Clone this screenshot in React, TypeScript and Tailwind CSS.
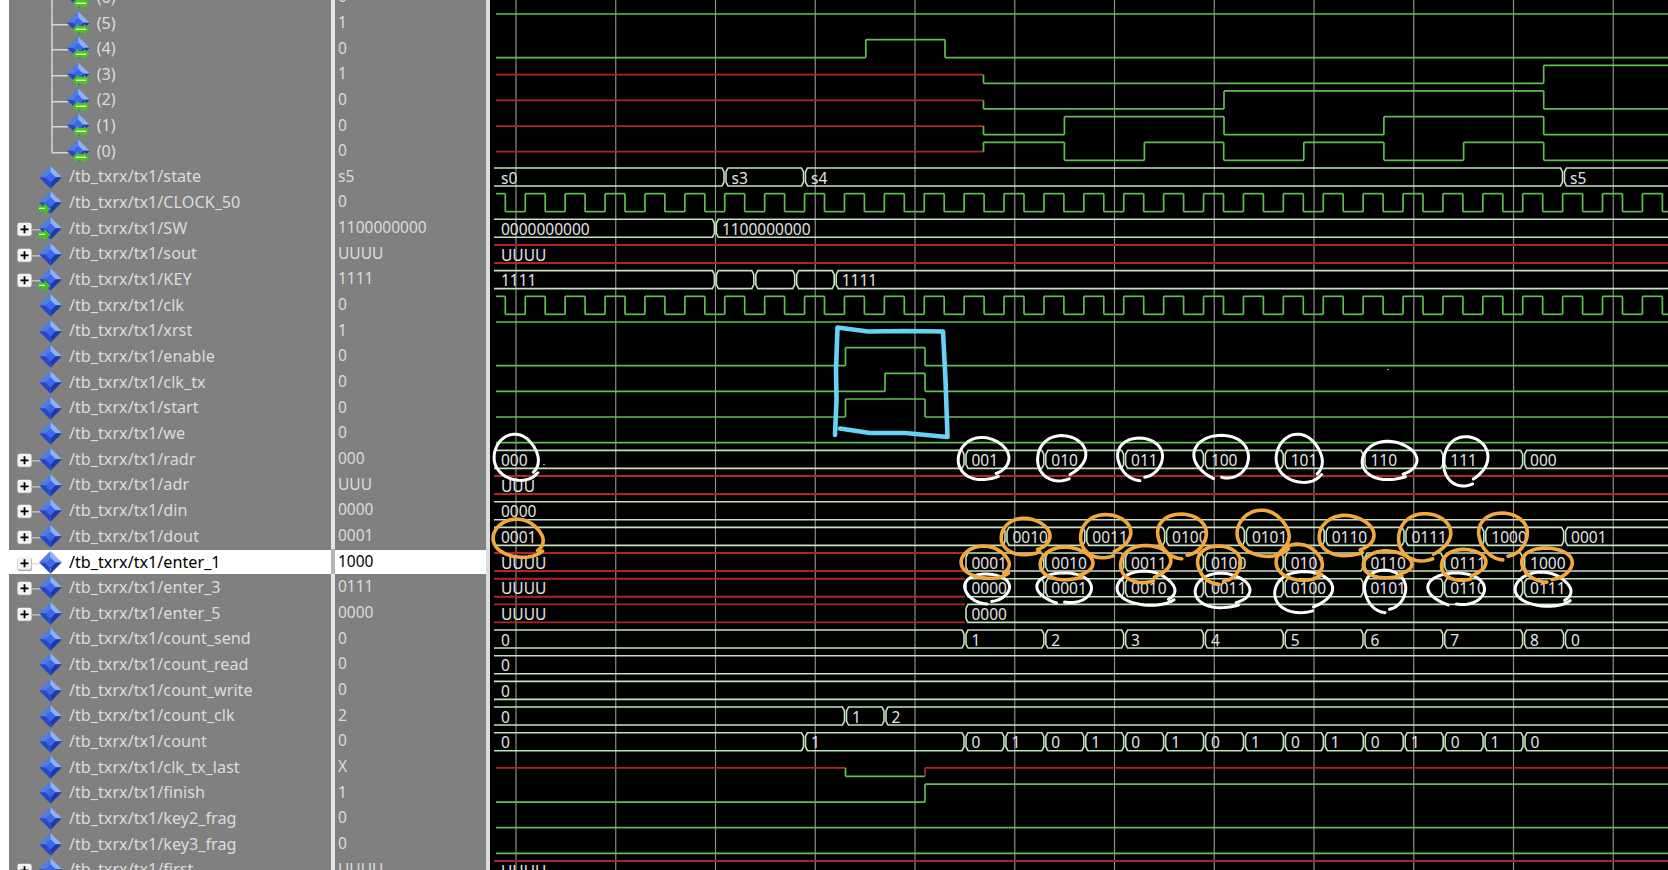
import React from 'react';

const rowY = (i: number) => 176.67 + 25.67 * i;
const LEFT = 496;
const RIGHT = 1668;
const GREEN = '#62bb54';
const RED = '#b02626';
const BUS = '#c2e2c0';

type Signal = { name: string; value: string; icon: 'sub' | 'plain' | 'in'; plus?: boolean; last?: boolean; selected?: boolean };

const sub = (n: number, value: string, last = false): Signal => ({ name: `(${n})`, value, icon: 'sub', last });
const sig = (n: string, value: string, plus = false, icon: 'plain' | 'in' = 'plain'): Signal => ({
  name: `/tb_txrx/tx1/${n}`,
  value,
  icon,
  plus,
});

const signals: Signal[] = [
  sub(6, '0'),
  sub(5, '1'),
  sub(4, '0'),
  sub(3, '1'),
  sub(2, '0'),
  sub(1, '0'),
  sub(0, '0', true),
  sig('state', 's5'),
  sig('CLOCK_50', '0', false, 'in'),
  sig('SW', '1100000000', true, 'in'),
  sig('sout', 'UUUU', true),
  sig('KEY', '1111', true, 'in'),
  sig('clk', '0'),
  sig('xrst', '1'),
  sig('enable', '0'),
  sig('clk_tx', '0'),
  sig('start', '0'),
  sig('we', '0'),
  sig('radr', '000', true),
  sig('adr', 'UUU', true),
  sig('din', '0000', true),
  sig('dout', '0001', true),
  { ...sig('enter_1', '1000', true), selected: true },
  sig('enter_3', '0111', true),
  sig('enter_5', '0000', true),
  sig('count_send', '0'),
  sig('count_read', '0'),
  sig('count_write', '0'),
  sig('count_clk', '2'),
  sig('count', '0'),
  sig('clk_tx_last', 'X'),
  sig('finish', '1'),
  sig('key2_frag', '0'),
  sig('key3_frag', '0'),
  sig('first', 'UUUU', true),
];

function Diamond({ cx, cy }: { cx: number; cy: number }) {
  const r = 11.4;
  const n = 5;
  return (
    <g>
      <polygon points={`${cx - r},${cy} ${cx},${cy - r} ${cx},${cy - n} ${cx - n},${cy}`} fill="#4f7ce6" />
      <polygon points={`${cx},${cy - r} ${cx + r},${cy} ${cx + n},${cy} ${cx},${cy - n}`} fill="#8db0f6" />
      <polygon points={`${cx + r},${cy} ${cx},${cy + r} ${cx},${cy + n} ${cx + n},${cy}`} fill="#1c39ad" />
      <polygon points={`${cx},${cy + r} ${cx - r},${cy} ${cx - n},${cy} ${cx},${cy + n}`} fill="#2747c8" />
      <polygon points={`${cx},${cy - n} ${cx + n},${cy} ${cx},${cy + n} ${cx - n},${cy}`} fill="#3a68ee" />
    </g>
  );
}

function RowIcon({ s }: { s: Signal }) {
  const mid = 12.83;
  if (s.icon === 'sub') {
    return (
      <svg className="shrink-0" width={87.7} height={25.67} viewBox="9 0 87.7 25.67" style={{ overflow: 'visible' }}>
        <path
          d={`M52 0V${s.last ? mid + 2 : 25.67}M52 ${mid + 2}H68`}
          fill="none"
          stroke="#d6d6d6"
          strokeWidth="1.5"
        />
        <Diamond cx={78.3} cy={mid} />
        <polygon
          points={`72.5,${mid + 6.5} 78,${mid + 1} 78,${mid + 3} 84,${mid + 3} 84,${mid + 1} 89.5,${mid + 6.5} 84,${mid + 12} 84,${mid + 10} 78,${mid + 10} 78,${mid + 12}`}
          fill="#4cc41e"
        />
        <path d={`M76 ${mid + 6.5}H86`} stroke="#eef9e6" strokeWidth="1.4" />
      </svg>
    );
  }
  return (
    <svg className="shrink-0" width={60} height={25.67} viewBox="9 0 60 25.67" style={{ overflow: 'visible' }}>
      {s.plus && (
        <g>
          <path d={`M31 ${mid + 2}H42`} stroke="#d0d0d0" strokeWidth="1.2" />
          <rect x={17.5} y={mid - 4} width={14.5} height={13} rx={2} fill="#8e8e8e" />
          <rect x={17.5} y={mid - 5} width={14} height={13} rx={2} fill="#f3f3f3" />
          <path d={`M20.5 ${mid + 1.5}H28.5M24.5 ${mid - 2.5}V${mid + 5.5}`} stroke="#000" strokeWidth="1.8" />
        </g>
      )}
      <Diamond cx={50.5} cy={mid + 0.5} />
      {s.icon === 'in' && (
        <g>
          <polygon
            points={`38,${mid + 4} 44,${mid + 4} 44,${mid + 1} 50.5,${mid + 7} 44,${mid + 13} 44,${mid + 10} 38,${mid + 10}`}
            fill="#46c01e"
          />
          <path d={`M39 ${mid + 6.5}H45`} stroke="#e8f8e0" strokeWidth="1.2" />
        </g>
      )}
    </svg>
  );
}

function SignalRow({ s }: { s: Signal }) {
  return (
    <div className="flex h-[25.67px] shrink-0">
      <div className={`flex w-[322px] shrink-0 items-center ${s.selected ? 'mt-[1px] bg-white text-black' : 'text-[#dcdcdc]'}`}>
        <RowIcon s={s} />
        <span className="whitespace-nowrap text-[16.2px] leading-none">{s.name}</span>
      </div>
      <div className={`w-[4px] shrink-0 ${s.selected ? 'bg-[#b4b4b4]' : 'bg-[#e6e6e6]'}`} />
      <div className={`flex flex-1 items-center pl-[3px] ${s.selected ? 'mt-[1px] bg-white text-black' : 'text-[#dcdcdc]'}`}>
        <span className="leading-none">{s.value}</span>
      </div>
    </div>
  );
}

// row index in the wave list: (6) is -7, state is 0
type Lvl = 'h' | 'l' | 'x';

function Bit({ row, steps }: { row: number; steps: [number, Lvl][] }) {
  const c = rowY(row);
  const y = (l: Lvl) => (l === 'h' ? c - 8.7 : l === 'l' ? c + 9.3 : c + 0.7);
  return (
    <g fill="none" strokeWidth="1.7">
      {steps.map(([x, l], k) => {
        const next = steps[k + 1];
        const end = next ? next[0] : RIGHT;
        return (
          <g key={k}>
            <path d={`M${x} ${y(l)}H${end}`} stroke={l === 'x' ? RED : GREEN} />
            {next && <path d={`M${end} ${y(l)}V${y(next[1])}`} stroke={next[1] === 'x' ? RED : GREEN} />}
          </g>
        );
      })}
    </g>
  );
}

function Label({ x, row, t }: { x: number; row: number; t: string }) {
  return (
    <text x={x} y={rowY(row) + 7} className="fill-[#e4e4e4] text-[15.5px]">
      {t}
    </text>
  );
}

function Bus({ row, segs }: { row: number; segs: [number, string, boolean?][] }) {
  const c = rowY(row);
  const top = c - 8.7;
  const bot = c + 9.3;
  return (
    <g fill="none" strokeWidth="1.6">
      {segs.map(([x, t, unknown], k) => {
        const next = segs[k + 1];
        const x0 = k === 0 ? LEFT - 2 : x + 1;
        const x1 = next ? next[0] - 1 : RIGHT + 5;
        const tx = k === 0 ? x + 5 : x + 6.5;
        const head = k === 0 ? `M${x0} ${top}` : `M${x0} ${top + 4}L${x0 + 2} ${top}`;
        const tail = k === 0 ? `H${x0}` : `H${x0 + 2}L${x0} ${bot - 4}Z`;
        return (
          <g key={k}>
            {unknown ? (
              <path d={`M${x0} ${top}H${x1 + 1}M${x0} ${bot}H${x1 + 1}`} stroke={RED} strokeWidth="1.9" />
            ) : (
              <path
                d={`${head}H${x1 - 2}L${x1} ${top + 4}V${bot - 4}L${x1 - 2} ${bot}${tail}`}
                stroke={BUS}
              />
            )}
            <Label x={tx} row={row} t={t} />
          </g>
        );
      })}
    </g>
  );
}

function clockSteps(): [number, Lvl][] {
  const out: [number, Lvl][] = [[LEFT, 'h']];
  for (let k = 0; k < 30; k++) {
    const fall = 505.3 + 39.9 * k;
    out.push([fall, 'l']);
    out.push([fall + 19.95, 'h']);
  }
  return out.filter(([x]) => x < RIGHT);
}

// hand drawn ring: starts at the lower right and ends a little outside, like a pen stroke
function loop(cx: number, cy: number, rx: number, ry: number, seed: number) {
  const pts: string[] = [];
  const a0 = 0.75 + seed * 0.22;
  const span = Math.PI * 2 + 0.1 - seed * 0.1;
  for (let k = 0; k <= 44; k++) {
    const t = k / 44;
    const a = a0 - span * t;
    const f = 0.9 + 0.16 * t + 0.05 * Math.sin(2 * a + seed * 1.7) + 0.03 * Math.sin(3 * a + seed);
    pts.push(`${(cx + rx * f * Math.cos(a)).toFixed(1)} ${(cy + ry * f * Math.sin(a)).toFixed(1)}`);
  }
  return 'M' + pts.join('L');
}

const whiteLoops = [
  [517, 457, 23, 23], [984, 458, 25, 22], [1062, 457, 25, 22], [1141, 458, 24, 20],
  [1223, 457, 27, 23], [1300, 458, 24, 24], [1390, 460, 27, 20], [1466, 460, 23, 24],
  [988, 588, 24, 14], [1066, 588, 27, 16], [1147, 588, 30, 17], [1223, 590, 27, 18],
  [1304, 591, 30, 20], [1386, 590, 22, 20], [1458, 589, 28, 17], [1544, 589, 29, 17],
];

const orangeLoops = [
  [519, 538, 26, 19], [1026, 536, 24, 19], [1106, 535, 26, 21], [1183, 535, 26, 21],
  [1264, 533, 27, 23], [1347, 535, 27, 21], [1425, 536, 27, 23], [1504, 535, 26, 22],
  [986, 562, 25, 16], [1067, 563, 26, 17], [1146, 563, 26, 18], [1220, 564, 23, 18],
  [1300, 562, 24, 18], [1388, 564, 24, 14], [1464, 564, 23, 15], [1548, 564, 27, 16],
];

const STEP = 79.8;
const T0 = 965;
const seq = (values: string[], start = T0, step = STEP) =>
  values.map((v, k) => [start + k * step, v] as [number, string]);

function Waves() {
  const gridXs = Array.from({ length: 12 }, (_, k) => 516 + k * 99.75);
  const counts: [number, string][] = [[LEFT, '0'], [804.5, '1']];
  ['0', '1', '0', '1', '0', '1', '0', '1', '0', '1', '0', '1', '0', '1', '0'].forEach((v, k) => {
    counts.push([T0 + k * 39.93, v]);
  });

  return (
    <svg className="block h-full w-full font-['Noto_Sans',sans-serif]" viewBox="490 0 1178 870">
      {gridXs.map((x) => (
        <path key={x} d={`M${x} 0V870`} stroke="#8c8c8c" strokeWidth="1.2" />
      ))}

      <path d={`M${LEFT} 14H${RIGHT}`} stroke={GREEN} strokeWidth="1.7" />
      <Bit row={-5} steps={[[LEFT, 'l'], [865.8, 'h'], [945, 'l']]} />
      <Bit row={-4} steps={[[LEFT, 'x'], [983.5, 'l'], [1543.7, 'h']]} />
      <Bit row={-3} steps={[[LEFT, 'x'], [983.5, 'l'], [1224, 'h'], [1543.7, 'l']]} />
      <Bit row={-2} steps={[[LEFT, 'x'], [983.5, 'l'], [1064.4, 'h'], [1224, 'l'], [1383.9, 'h'], [1543.7, 'l']]} />
      <Bit
        row={-1}
        steps={[[LEFT, 'x'], [983.5, 'h'], [1064.4, 'l'], [1144.4, 'h'], [1223.7, 'l'], [1303.8, 'h'], [1383.9, 'l'], [1463.6, 'h'], [1543.7, 'l']]}
      />

      <Bus row={0} segs={[[LEFT, 's0'], [725, 's3'], [804.5, 's4'], [1563.5, 's5']]} />
      <Bit row={1} steps={clockSteps()} />
      <Bus row={2} segs={[[LEFT, '0000000000'], [715.4, '1100000000']]} />
      <Bus row={3} segs={[[LEFT, 'UUUU', true]]} />
      <Bus row={4} segs={[[LEFT, '1111'], [715.4, ''], [754.8, ''], [795.7, ''], [835.2, '1111']]} />
      <Bit row={5} steps={clockSteps()} />
      <Bit row={6} steps={[[LEFT, 'h']]} />
      <Bit row={7} steps={[[LEFT, 'l'], [845.5, 'h'], [925, 'l']]} />
      <Bit row={8} steps={[[LEFT, 'l'], [885, 'h'], [925, 'l']]} />
      <Bit row={9} steps={[[LEFT, 'l'], [845.5, 'h'], [925, 'l']]} />
      <Bit row={10} steps={[[LEFT, 'l']]} />

      <Bus row={11} segs={[[LEFT, '000'], ...seq(['001', '010', '011', '100', '101', '110', '111', '000'])]} />
      <Bus row={12} segs={[[LEFT, 'UUU', true]]} />
      <Bus row={13} segs={[[LEFT, '0000']]} />
      <Bus
        row={14}
        segs={[[LEFT, '0001'], ...seq(['0010', '0011', '0100', '0101', '0110', '0111', '1000', '0001'], 1006)]}
      />
      <Bus
        row={15}
        segs={[[LEFT, 'UUUU', true], ...seq(['0001', '0010', '0011', '0100', '0101', '0110', '0111', '1000'])]}
      />
      <Bus
        row={16}
        segs={[[LEFT, 'UUUU', true], ...seq(['0000', '0001', '0010', '0011', '0100', '0101', '0110', '0111'])]}
      />
      <Bus row={17} segs={[[LEFT, 'UUUU', true], [T0, '0000']]} />
      <Bus
        row={18}
        segs={[[LEFT, '0'], ...seq(['1', '2', '3', '4', '5', '6', '7', '8']), [1564.5, '0']]}
      />
      <Bus row={19} segs={[[LEFT, '0']]} />
      <Bus row={20} segs={[[LEFT, '0']]} />
      <Bus row={21} segs={[[LEFT, '0'], [845.5, '1'], [885, '2']]} />
      <Bus row={22} segs={counts} />
      <Bit row={23} steps={[[LEFT, 'x'], [845.5, 'l'], [925, 'x']]} />
      <Bit row={24} steps={[[LEFT, 'l'], [925, 'h']]} />
      <Bit row={25} steps={[[LEFT, 'l']]} />
      <Bit row={26} steps={[[LEFT, 'l']]} />
      <Bus row={27} segs={[[LEFT, 'UUUU', true]]} />

      {/* pen marks over the waves */}
      <path
        d="M837.5 327.5L868 331.5L905 331L943 331.5L945.5 380L947.5 437M947.5 437L905 433L870 433L840 428.5M837.5 327.5L836 370L836.5 400L835 435"
        fill="none"
        stroke="#66d3f6"
        strokeWidth="4.6"
        strokeLinecap="round"
        strokeLinejoin="round"
      />
      <g fill="none" stroke="#ffffff" strokeWidth="3" strokeLinecap="round" strokeLinejoin="round">
        {whiteLoops.map(([cx, cy, rx, ry], k) => (
          <path key={k} d={loop(cx, cy, rx, ry, k % 5)} />
        ))}
      </g>
      <g fill="none" stroke="#f2a93c" strokeWidth="3.6" strokeLinecap="round" strokeLinejoin="round">
        {orangeLoops.map(([cx, cy, rx, ry], k) => (
          <path key={k} d={loop(cx, cy, rx, ry, k % 4)} />
        ))}
      </g>
      <circle cx={1388} cy={369.5} r={0.8} fill="#d0d0d0" />
      <circle cx={544} cy={464.5} r={0.8} fill="#d0d0d0" />
    </svg>
  );
}

export default function App() {
  return (
    <div className="flex h-[870px] w-[1668px] overflow-hidden bg-white pl-[9px] font-['Noto_Sans',sans-serif] text-[15.5px]">
      <div className="flex w-[477px] shrink-0 flex-col bg-[#808080]">
        <div className="-mt-[15.86px] flex flex-col">
          {signals.map((s) => (
            <SignalRow key={s.name} s={s} />
          ))}
        </div>
      </div>
      <div className="w-[4px] shrink-0 bg-[#dcdcdc]" />
      <div className="min-w-0 flex-1 bg-black">
        <Waves />
      </div>
    </div>
  );
}
